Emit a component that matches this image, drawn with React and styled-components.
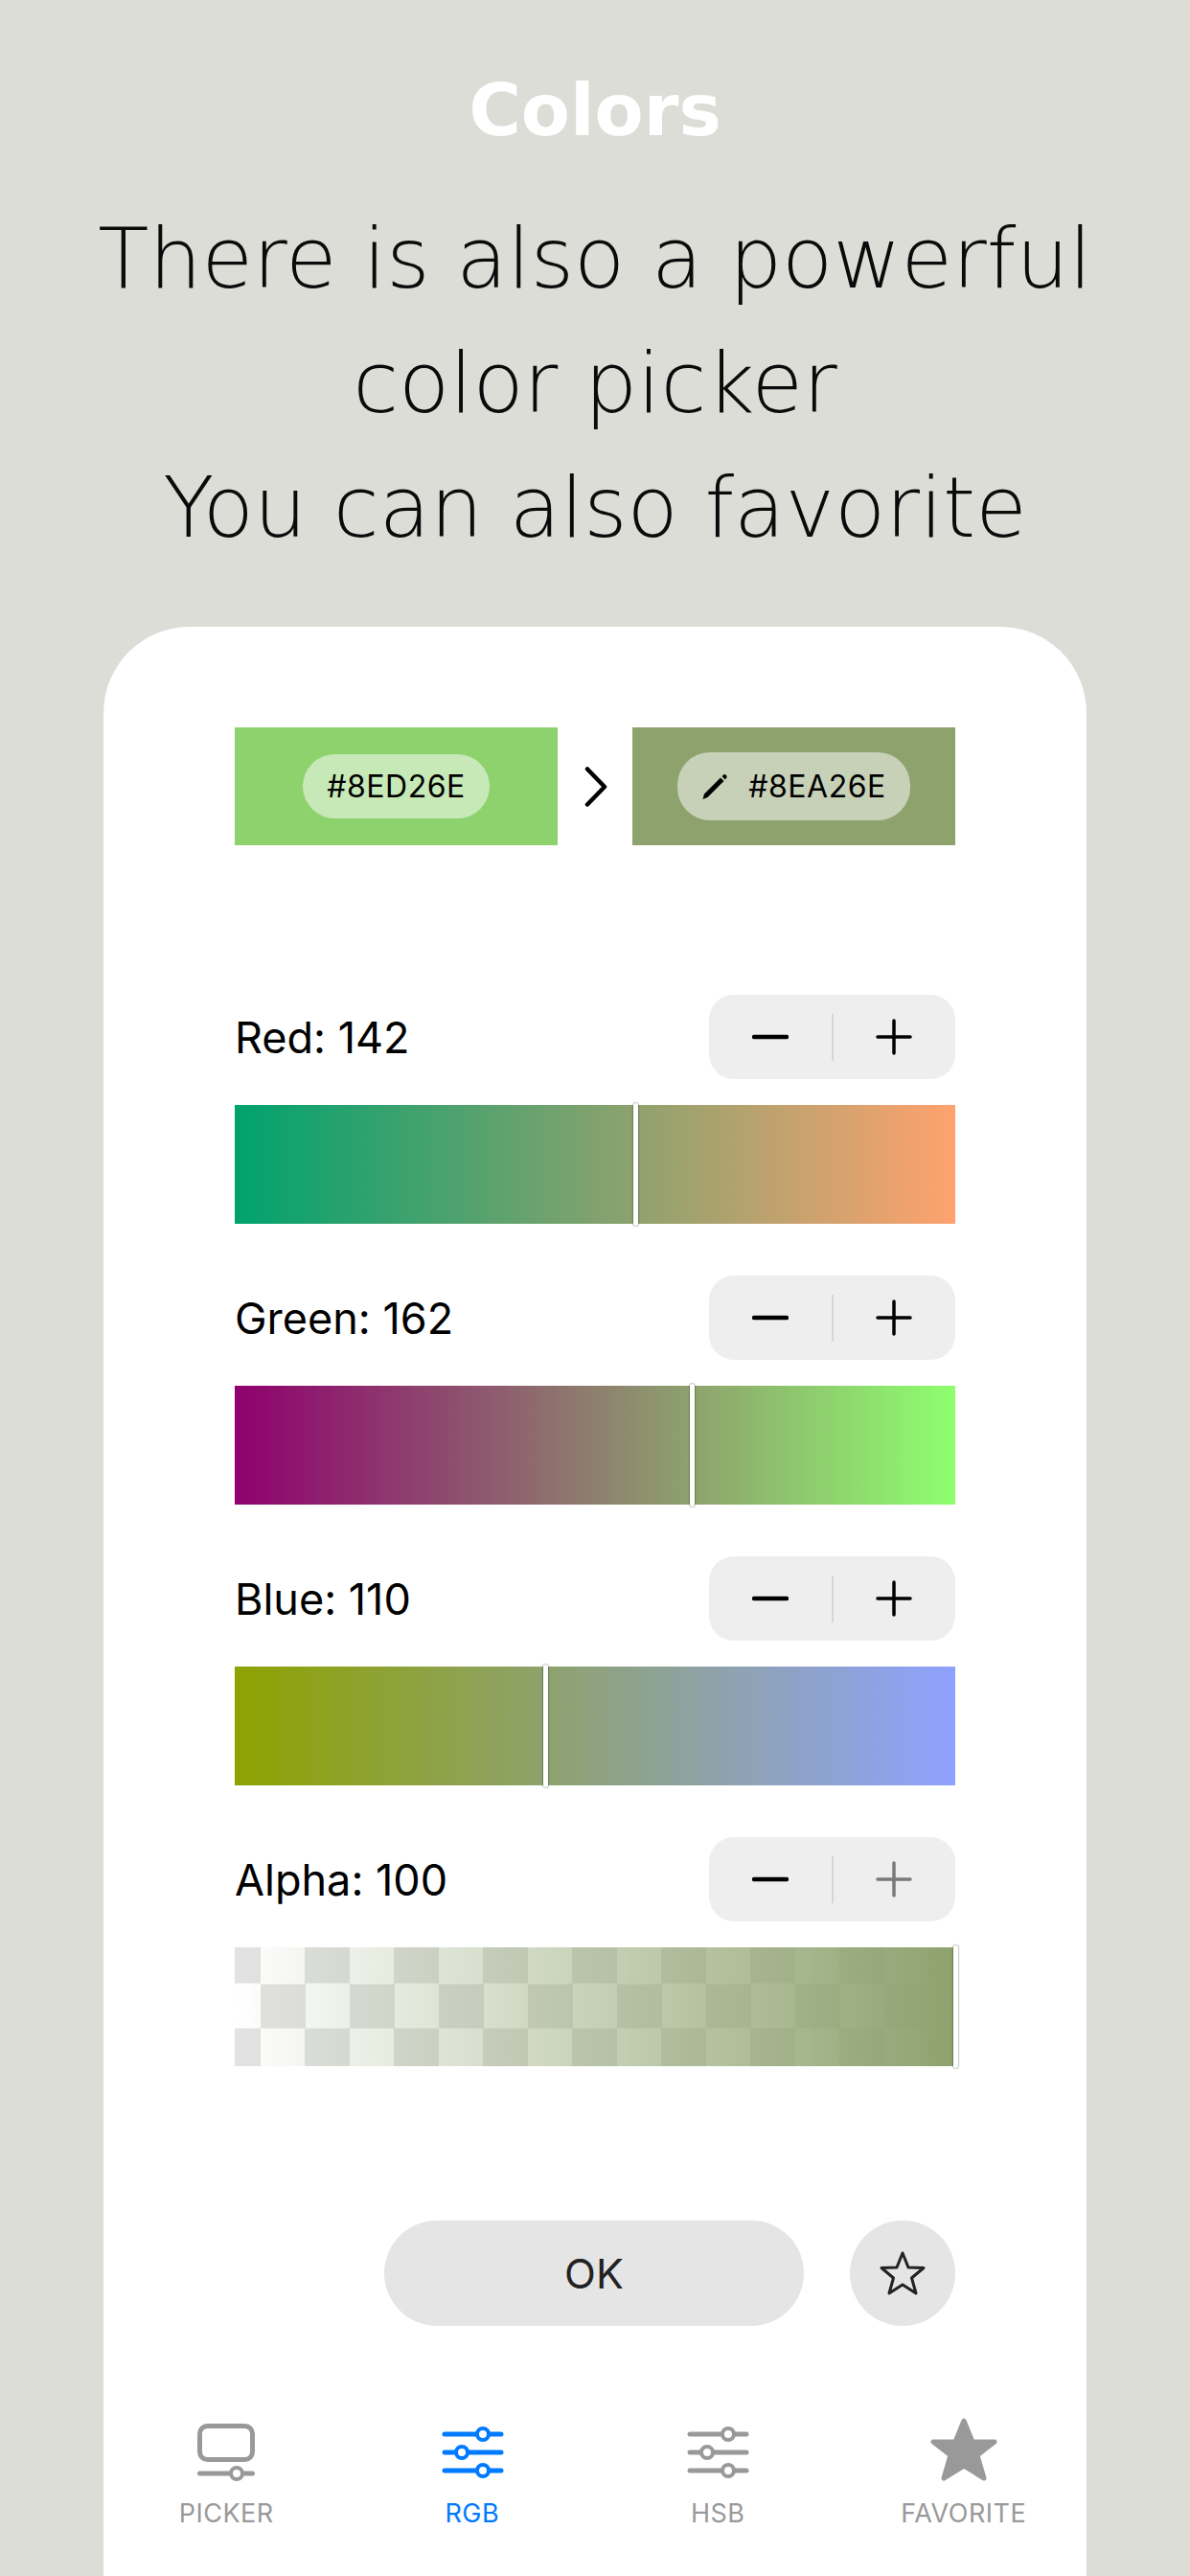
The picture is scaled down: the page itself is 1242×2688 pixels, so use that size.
import React from "react";
import styled, { createGlobalStyle } from "styled-components";

const Global = createGlobalStyle`
  html, body { margin: 0; padding: 0; background: #dcddd7; }
  body { font-family: "Inter", "Liberation Sans", sans-serif; }
`;

const Page = styled.div`
  width: 1242px;
  height: 2688px;
  overflow: hidden;
  background: #dcddd7;
  display: flex;
  flex-direction: column;
  align-items: center;
`;

const Title = styled.h1`
  margin: 71px 0 0;
  height: 90px;
  font: 700 74.500px/90px "DejaVu Sans", sans-serif;
  color: #fff;
`;

const Lead = styled.p`
  margin: 44px 0 0;
  width: 1100px;
  text-align: center;
  font: 200 87px/130px "DejaVu Sans", sans-serif;
  color: #0a0a0a;
`;

const Card = styled.section`
  margin-top: 59px;
  width: 1026px;
  flex: 1;
  background: #fff;
  border-radius: 90px 90px 0 0;
  display: flex;
  flex-direction: column;
`;

const Content = styled.div`
  padding: 105px 137px 0;
  display: flex;
  flex-direction: column;
`;

const Swatches = styled.div`
  display: flex;
  align-items: center;
  justify-content: space-between;
  height: 123px;
  margin-bottom: 156px;
`;

const Swatch = styled.div`
  width: 337px;
  height: 123px;
  background: ${(p) => p.$color};
  display: flex;
  align-items: center;
  justify-content: center;
`;

const HexPill = styled.div`
  height: ${(p) => p.$h}px;
  width: ${(p) => p.$w}px;
  border-radius: 34px;
  background: rgba(255, 255, 255, 0.5);
  display: flex;
  align-items: center;
  justify-content: center;
  gap: 21px;
  font: 400 32px/1 "Inter", sans-serif;
  letter-spacing: 0.5px;
  color: #000;
`;

const Sliders = styled.div`
  display: flex;
  flex-direction: column;
  gap: 54px;
`;

const SliderRow = styled.div`
  display: flex;
  flex-direction: column;
  gap: 27px;
`;

const SliderHead = styled.div`
  display: flex;
  align-items: center;
  justify-content: space-between;
  height: 88px;
`;

const SliderLabel = styled.span`
  font: 400 45px/1 "Inter", sans-serif;
  color: #000;
`;

const Stepper = styled.div`
  width: 257px;
  height: 88px;
  border-radius: 26px;
  background: #eeeeee;
  display: flex;
  align-items: center;
`;

const StepButton = styled.div`
  flex: 1;
  display: flex;
  align-items: center;
  justify-content: center;
  color: ${(p) => (p.$disabled ? "#7a7a7a" : "#000")};
`;

const StepDivider = styled.div`
  width: 2px;
  height: 49px;
  background: #d6d6d6;
`;

const Track = styled.div`
  position: relative;
  height: 124px;
  background: ${(p) => p.$bg};
  ${(p) =>
    p.$checker &&
    `
    background:
      ${p.$bg},
      conic-gradient(#e3e3e3 25%, #ffffff 0 50%, #e3e3e3 0 75%, #ffffff 0) -66px -8.5px / 93px 93px;
  `}
`;

const Thumb = styled.div`
  position: absolute;
  top: -2px;
  bottom: -2px;
  width: 5px;
  margin-left: -2.5px;
  background: #fff;
  border-radius: 2px;
  box-shadow: 0 0 2px rgba(0, 0, 0, 0.75);
`;

const Actions = styled.div`
  display: flex;
  justify-content: flex-end;
  align-items: center;
  gap: 48px;
  margin-top: 161px;
`;

const OkButton = styled.div`
  width: 438px;
  height: 110px;
  border-radius: 55px;
  background: #e5e5e5;
  display: flex;
  align-items: center;
  justify-content: center;
  font: 400 43px/1 "Inter", sans-serif;
  color: #222;
`;

const RoundButton = styled.div`
  width: 110px;
  height: 110px;
  border-radius: 50%;
  background: #e5e5e5;
  display: flex;
  align-items: center;
  justify-content: center;
`;

const Tabs = styled.nav`
  display: grid;
  grid-template-columns: repeat(4, 1fr);
  margin-top: 96px;
`;

const Tab = styled.div`
  display: flex;
  flex-direction: column;
  align-items: center;
  gap: 17px;
  color: ${(p) => (p.$active ? "#007aff" : "#999999")};
`;

const TabLabel = styled.span`
  font: 400 27px/26px "Inter", sans-serif;
  letter-spacing: 0.5px;
`;

const TabIcon = styled.svg`
  display: block;
  width: 80px;
  height: 70px;
`;

const Chevron = () => (
  <svg width="28" height="42" viewBox="0 0 28 42" fill="none" stroke="#000" strokeWidth="4.5" strokeLinecap="round" strokeLinejoin="round">
    <path d="M6 2.500 L24 21 L6 39.500" />
  </svg>
);

const Pencil = () => (
  <svg width="28" height="28" viewBox="0 0 28 28" fill="#000">
    <path d="M1.500 27 L3 21.500 L20 4.500 L23.500 8 L6.500 25 Z" />
    <path d="M21.500 3 L23.500 1.200 Q25 0.800 26 2 Q27 3.300 26.300 4.800 L24.700 6.500 Z" />
  </svg>
);

const Minus = () => (
  <svg width="38" height="38" viewBox="0 0 38 38" stroke="currentColor" strokeWidth="4.500" strokeLinecap="round">
    <path d="M2 19 H36" />
  </svg>
);

const Plus = () => (
  <svg width="38" height="38" viewBox="0 0 38 38" stroke="currentColor" strokeWidth="3.500" strokeLinecap="round">
    <path d="M2 19 H36" />
    <path d="M19 2 V36" />
  </svg>
);

const StarOutline = () => (
  <svg width="50" height="48" viewBox="0 0 50 48" fill="none" stroke="#222" strokeWidth="3" strokeLinejoin="round">
    <path d="M25 3 L31 18 L47 18.500 L34.500 29 L39 45 L25 36 L11 45 L15.500 29 L3 18.500 L19 18 Z" />
  </svg>
);

const PickerIcon = () => (
  <TabIcon viewBox="0 0 80 70">
    <rect x="12.500" y="8.500" width="55" height="35" rx="8" fill="none" stroke="currentColor" strokeWidth="5" />
    <path d="M12.500 58 H67.500" stroke="currentColor" strokeWidth="5" strokeLinecap="round" />
    <circle cx="51" cy="58" r="6" fill="#fff" stroke="currentColor" strokeWidth="4" />
  </TabIcon>
);

const SlidersIcon = () => (
  <TabIcon viewBox="0 0 80 70">
    {[
      [17, 51],
      [36, 29],
      [55, 51],
    ].map(([y, x]) => (
      <g key={y}>
        <path d={`M11 ${y} H70`} stroke="currentColor" strokeWidth="5" strokeLinecap="round" />
        <circle cx={x} cy={y} r="6" fill="#fff" stroke="currentColor" strokeWidth="4" />
      </g>
    ))}
  </TabIcon>
);

const StarIcon = () => (
  <TabIcon viewBox="0 0 80 70">
    <path
      d="M40 3 L49 25 L72 25 L54 39 L61 63 L40 50 L19 63 L26 39 L8 25 L31 25 Z"
      fill="currentColor"
      stroke="currentColor"
      strokeWidth="5"
      strokeLinejoin="round"
    />
  </TabIcon>
);

const sliders = [
  { label: "Red: 142", value: 142, bg: "linear-gradient(90deg, rgb(0,162,110), rgb(255,162,110))" },
  { label: "Green: 162", value: 162, bg: "linear-gradient(90deg, rgb(142,0,110), rgb(142,255,110))" },
  { label: "Blue: 110", value: 110, bg: "linear-gradient(90deg, rgb(142,162,0), rgb(142,162,255))" },
  {
    label: "Alpha: 100",
    value: 255,
    checker: true,
    plusDisabled: true,
    bg: "linear-gradient(90deg, rgba(142,162,110,0), rgb(142,162,110))",
  },
];

const tabs = [
  { label: "PICKER", Icon: PickerIcon },
  { label: "RGB", Icon: SlidersIcon, active: true },
  { label: "HSB", Icon: SlidersIcon },
  { label: "FAVORITE", Icon: StarIcon },
];

export default function App() {
  return (
    <Page>
      <Global />
      <Title>Colors</Title>
      <Lead>
        There is also a powerful
        <br />
        color picker
        <br />
        You can also favorite
      </Lead>
      <Card>
        <Content>
          <Swatches>
            <Swatch $color="#8ed26e">
              <HexPill $w={195} $h={67}>#8ED26E</HexPill>
            </Swatch>
            <Chevron />
            <Swatch $color="#8ea26e">
              <HexPill $w={243} $h={71}>
                <Pencil />
                #8EA26E
              </HexPill>
            </Swatch>
          </Swatches>
          <Sliders>
            {sliders.map((s) => (
              <SliderRow key={s.label}>
                <SliderHead>
                  <SliderLabel>{s.label}</SliderLabel>
                  <Stepper>
                    <StepButton>
                      <Minus />
                    </StepButton>
                    <StepDivider />
                    <StepButton $disabled={s.plusDisabled}>
                      <Plus />
                    </StepButton>
                  </Stepper>
                </SliderHead>
                <Track $bg={s.bg} $checker={s.checker}>
                  <Thumb style={{ left: `${(s.value / 255) * 100}%` }} />
                </Track>
              </SliderRow>
            ))}
          </Sliders>
          <Actions>
            <OkButton>OK</OkButton>
            <RoundButton>
              <StarOutline />
            </RoundButton>
          </Actions>
        </Content>
        <Tabs>
          {tabs.map(({ label, Icon, active }) => (
            <Tab key={label} $active={active}>
              <Icon />
              <TabLabel>{label}</TabLabel>
            </Tab>
          ))}
        </Tabs>
      </Card>
    </Page>
  );
}
